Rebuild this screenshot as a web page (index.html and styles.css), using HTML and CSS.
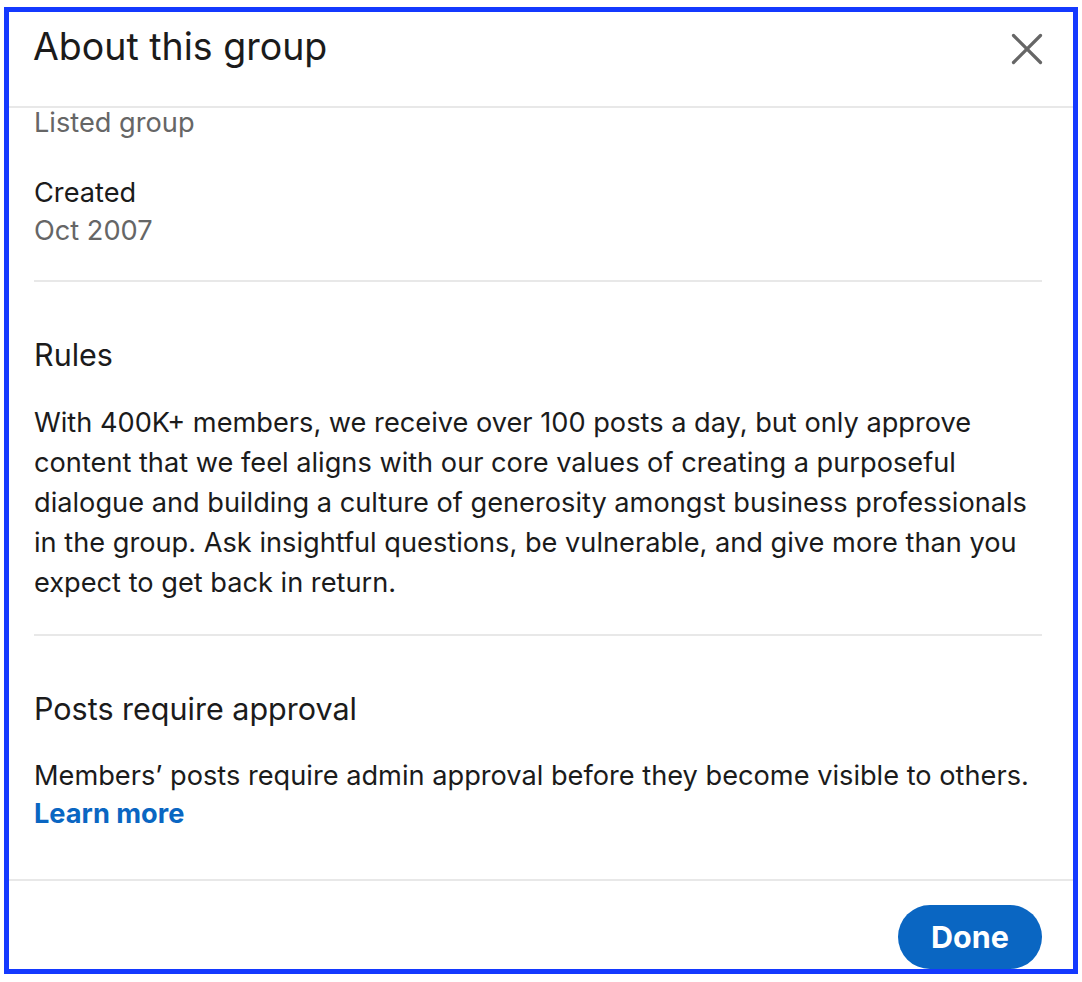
FILE: index.html
```html
<!DOCTYPE html>
<html lang="en">
<head>
<meta charset="utf-8">
<title>About this group</title>
<link rel="stylesheet" href="styles.css">
</head>
<body>
<div class="frame">
  <header class="modal-header">
    <h2 class="modal-title">About this group</h2>
    <button class="close-btn" aria-label="Dismiss">
      <svg width="32" height="32" viewBox="0 0 32 32" aria-hidden="true">
        <path d="M2.5 2.5 L29.5 29.5 M29.5 2.5 L2.5 29.5" stroke="#666" stroke-width="3.2" stroke-linecap="round" fill="none"/>
      </svg>
    </button>
  </header>
  <div class="modal-body">
    <section class="section section-top">
      <p class="muted first">Listed group</p>
      <p class="label">Created</p>
      <p class="muted">Oct 2007</p>
    </section>
    <section class="section">
      <h3 class="section-title">Rules</h3>
      <p class="para">With 400K+ members, we receive over 100 posts a day, but only approve content that we feel aligns with our core values of creating a purposeful dialogue and building a culture of generosity amongst business professionals in the group. Ask insightful questions, be vulnerable, and give more than you expect to get back in return.</p>
    </section>
    <section class="section section-last">
      <h3 class="section-title">Posts require approval</h3>
      <p class="label">Members’ posts require admin approval before they become visible to others.</p>
      <a class="link" href="#">Learn more</a>
    </section>
  </div>
  <footer class="modal-footer">
    <button class="done-btn">Done</button>
  </footer>
</div>
</body>
</html>
```
FILE: styles.css
```css
* { box-sizing: border-box; }
html, body { margin: 0; padding: 0; background: #fff; }
body {
  font-family: Inter, "Noto Sans", "Liberation Sans", sans-serif;
  color: #1b1b1b;
}
p, h2, h3 { margin: 0; font-weight: 400; }

.frame {
  margin: 7px 0 0 4px;
  width: 1074px;
  height: 967px;
  border: 5px solid #1439ff;
  overflow: hidden;
  display: flex;
  flex-direction: column;
  background: #fff;
}

.modal-header {
  height: 96px;
  flex: none;
  display: flex;
  align-items: flex-start;
  justify-content: space-between;
  padding: 14px 30px 0 24px;
  border-bottom: 2px solid #e8e8e8;
}
.modal-title {
  font-size: 37.5px;
  line-height: 42px;
  color: #1b1b1b;
}
.close-btn {
  background: none;
  border: 0;
  padding: 0;
  margin-top: 7px;
  width: 32px;
  height: 32px;
  cursor: pointer;
}
.close-btn svg { display: block; }

.modal-body {
  flex: 1;
  padding: 0 31px 0 25px;
}
.section {
  padding: 53px 0 32px;
  border-bottom: 2px solid #e8e8e8;
}
.section-top { padding-top: 1px; padding-bottom: 30px; }
.section-last { border-bottom: 0; }

.muted {
  font-size: 27.2px;
  line-height: 38px;
  color: #666;
}
.muted.first { line-height: 28px; margin-bottom: 37px; }
.label {
  font-size: 27.2px;
  line-height: 38px;
  color: #1b1b1b;
}
.section-title {
  font-size: 30.5px;
  line-height: 40px;
  color: #1b1b1b;
  margin-bottom: 28px;
}
.para {
  font-size: 27.2px;
  line-height: 40px;
  color: #1b1b1b;
}
.section .para { margin-bottom: -1px; }
.link {
  display: block;
  font-size: 27.2px;
  line-height: 38px;
  font-weight: 700;
  color: #0a66c2;
  text-decoration: none;
}

.modal-footer {
  flex: none;
  height: 90px;
  border-top: 2px solid #e8e8e8;
  display: flex;
  justify-content: flex-end;
  align-items: flex-start;
  padding: 24px 31px 0 0;
}
.done-btn {
  width: 144px;
  height: 64px;
  border-radius: 32px;
  border: 0;
  background: #0a66c2;
  color: #fff;
  font-family: Inter, "Noto Sans", "Liberation Sans", sans-serif;
  font-size: 30.5px;
  font-weight: 700;
  cursor: pointer;
  padding: 0 0 2px;
}
```
